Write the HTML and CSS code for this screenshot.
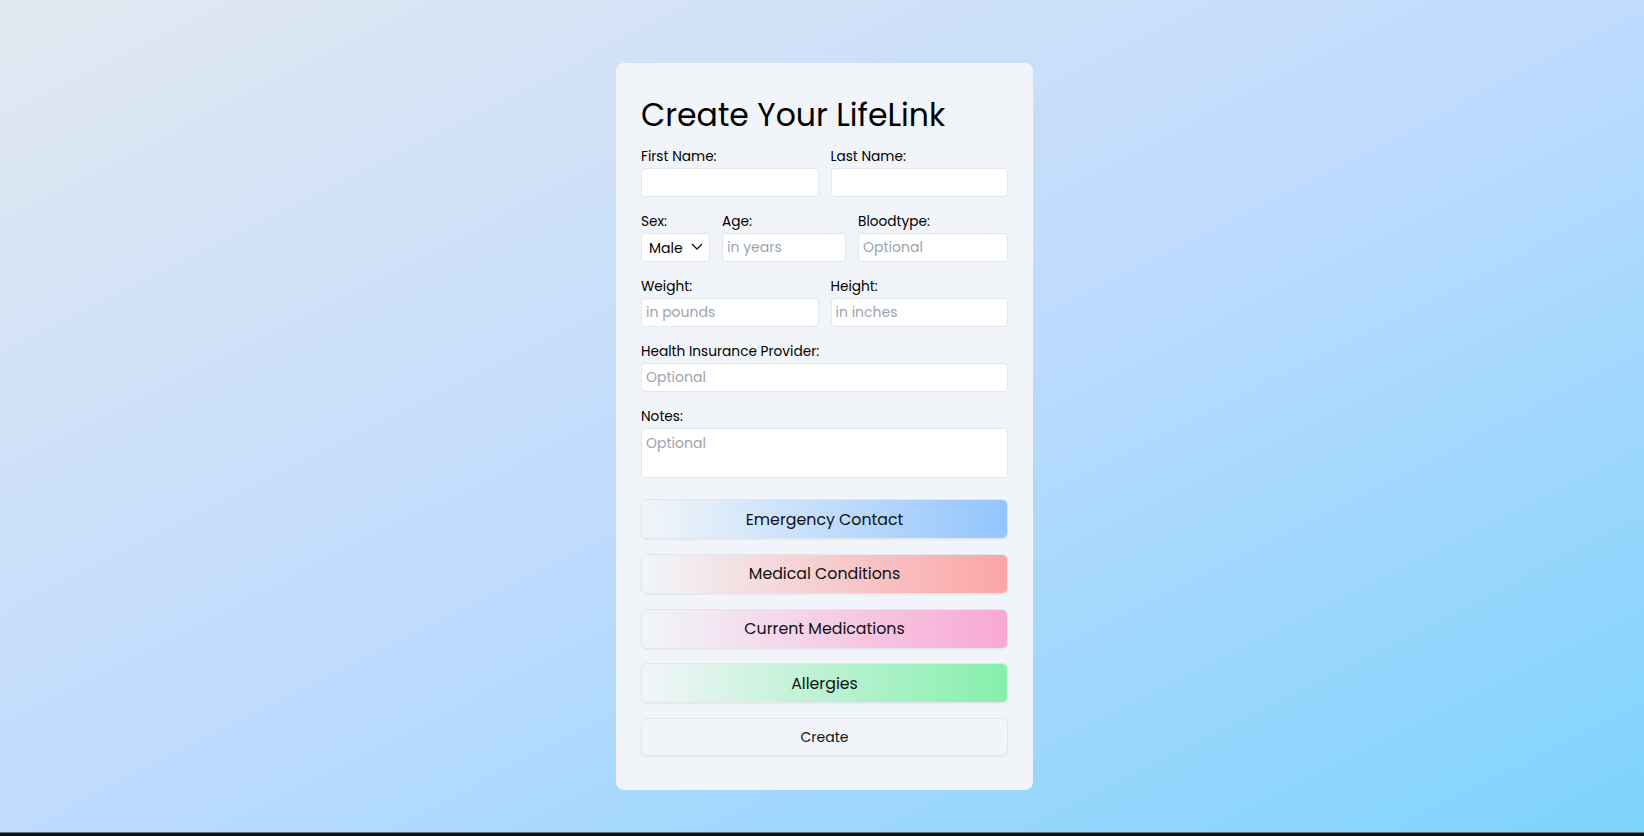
FILE: index.html
```html
<!DOCTYPE html>
<html lang="en">
<head>
	<meta charset="UTF-8">
	<title>LifeLink</title>
<link rel="stylesheet" href="styles.css">
</head>
<body>
<div class="page">
	<div class="card">
		<h1 class="title">Create Your LifeLink</h1>
		<div class="row two">
			<div class="field"><label>First Name:</label><input type="text"></div>
			<div class="field"><label>Last Name:</label><input type="text"></div>
		</div>
		<div class="row three">
			<div class="field"><label>Sex:</label>
				<div class="select-wrap">
					<select><option>Male</option><option>Female</option></select>
					<svg class="chev" width="12" height="7" viewBox="0 0 12 7"><path d="M1 1 L6 6 L11 1" fill="none" stroke="#111" stroke-width="1.3"/></svg>
				</div>
			</div>
			<div class="field"><label>Age:</label><input type="text" placeholder="in years"></div>
			<div class="field"><label>Bloodtype:</label><input type="text" placeholder="Optional"></div>
		</div>
		<div class="row two">
			<div class="field"><label>Weight:</label><input type="text" placeholder="in pounds"></div>
			<div class="field"><label>Height:</label><input type="text" placeholder="in inches"></div>
		</div>
		<div class="row">
			<div class="field"><label>Health Insurance Provider:</label><input type="text" placeholder="Optional"></div>
		</div>
		<div class="row">
			<div class="field"><label>Notes:</label><textarea placeholder="Optional"></textarea></div>
		</div>
		<div class="buttons">
			<button class="btn blue">Emergency Contact</button>
			<button class="btn red">Medical Conditions</button>
			<button class="btn pink">Current Medications</button>
			<button class="btn green">Allergies</button>
			<button class="btn create">Create</button>
		</div>
	</div>
</div>
</body>
</html>
```

FILE: styles.css
```css
*{padding: 0;margin: 0;box-sizing: border-box;}
html{background: #111;}
body{font-family: "Poppins", "Open Sans", "DejaVu Sans", sans-serif;color: #000;}
.page{
	height: 833px;border-bottom: 1px solid #5f7383;padding: 63px 0 0 5px;
	display: flex;justify-content: center;align-items: flex-start;
	background: linear-gradient(to bottom right, #e2e8f0, #bfdbfe 50%, #7dd3fc);
}
.card{width: 417px;background: #f1f5f9;border-radius: 8px;padding: 30px 25px 34px;}
.title{font-size: 31.5px;font-weight: 400;line-height: 44px;margin-bottom: 10px;}
.row{display: grid;grid-template-columns: 1fr;gap: 12px;margin-bottom: 15px;}
.row.two{grid-template-columns: 1fr 1fr;}
.row.three{grid-template-columns: 69px 124px 1fr;}
.field label{display: block;font-size: 13.7px;line-height: 20px;margin-bottom: 1px;}
input, select, textarea{
	width: 100%;height: 29px;border: 1px solid #e3e7ec;border-radius: 4px;background: #fff;
	font-family: inherit;font-size: 14px;color: #000;padding: 0 4px;outline: none;
}
textarea{height: 50px;padding: 4px 4px;resize: none;display: block;}
::placeholder{color: #9ca3af;}
.select-wrap{position: relative;}
select{-webkit-appearance: none;appearance: none;padding-left: 7px;font-size: 14px;}
.chev{position: absolute;right: 7px;top: 10px;pointer-events: none;}
.buttons{margin-top: 21px;display: flex;flex-direction: column;gap: 14.8px;}
.btn{
	height: 40px;border: 1px solid #e2e6eb;border-radius: 6px;font-family: inherit;font-size: 15.8px;color: #111;
	box-shadow: 0 1px 2px rgba(0,0,0,0.05);cursor: pointer;
}
.blue{background: linear-gradient(to right, #f1f5f9, #93c5fd);}
.red{background: linear-gradient(to right, #f1f5f9, #fca5a5);}
.pink{background: linear-gradient(to right, #f1f5f9, #f9a8d4);}
.green{background: linear-gradient(to right, #f1f5f9, #86efac);}
.create{background: #f1f5f9;font-size: 14px;height: 38px;}
```
